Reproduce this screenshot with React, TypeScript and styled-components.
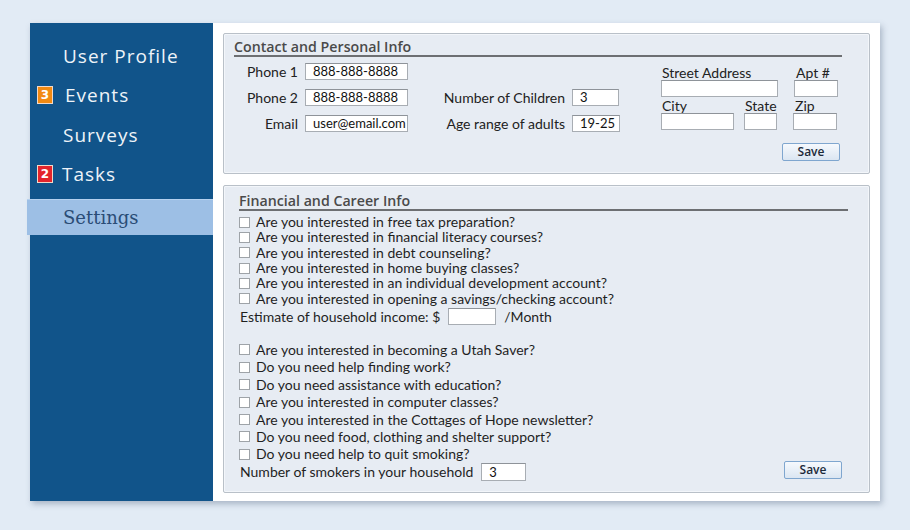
import React from "react";
import styled, { createGlobalStyle } from "styled-components";

const GlobalStyle = createGlobalStyle`
  html, body {
    margin: 0;
    padding: 0;
    background: #e2ebf5;
  }
  body {
    font-family: Lato, "Open Sans", sans-serif;
    color: #222;
  }
`;

const Page = styled.div`
  width: 910px;
  height: 530px;
  padding: 23px 30px 0 30px;
  box-sizing: border-box;
`;

const Window = styled.div`
  display: flex;
  width: 850px;
  height: 478px;
  background: #fff;
  box-shadow: 2px 3px 6px rgba(60, 80, 110, 0.35);
`;

const Sidebar = styled.nav`
  width: 183px;
  flex-shrink: 0;
  background: #11548a;
  padding-top: 13px;
  display: flex;
  flex-direction: column;
`;

const NavItem = styled.div<{ $active?: boolean }>`
  display: flex;
  align-items: center;
  height: ${(p) => (p.$active ? "35px" : "39.5px")};
  margin-left: ${(p) => (p.$active ? "-3px" : "0")};
  padding-left: ${(p) => (p.$active ? "10px" : "7px")};
  background: ${(p) => (p.$active ? "#9dbfe5" : "transparent")};
  border-top: ${(p) => (p.$active ? "1px solid #b5d0ee" : "none")};
  margin-top: ${(p) => (p.$active ? "5px" : "0")};
`;

const Badge = styled.span<{ $color: string; $gap: number }>`
  width: 16px;
  height: 18px;
  box-sizing: border-box;
  border: 1px solid #f2d9c8;
  background: ${(p) => p.$color};
  color: #fff;
  font-family: "DejaVu Sans", sans-serif;
  font-weight: bold;
  font-size: 12px;
  display: flex;
  align-items: center;
  justify-content: center;
  margin-right: ${(p) => p.$gap}px;
`;

const NavLabel = styled.span<{ $indent?: boolean }>`
  font-family: "Open Sans", sans-serif;
  font-size: 19px;
  letter-spacing: 1px;
  color: #eef3f8;
  padding-left: ${(p) => (p.$indent ? "26px" : "0")};
`;

const ActiveLabel = styled.span`
  font-family: "DejaVu Serif", serif;
  font-size: 18px;
  color: #2a4c76;
  padding-left: 26px;
`;

const Content = styled.main`
  flex: 1;
  padding: 10px 10px 8px 10px;
  display: flex;
  flex-direction: column;
  gap: 11px;
`;

const Panel = styled.section`
  background: #e7ecf3;
  border: 1px solid #b9c0c8;
  border-radius: 2px;
  box-shadow: inset 0 0 0 1px #f3f6fa;
`;

const ContactPanel = styled(Panel)`
  height: 141px;
  box-sizing: border-box;
  padding: 4px 27px 0 10px;
`;

const FinancePanel = styled(Panel)`
  flex: 1;
  padding: 6px 21px 0 15px;
`;

const PanelTitle = styled.h2`
  margin: 0;
  font-family: "Open Sans", sans-serif;
  font-weight: 600;
  font-size: 14.2px;
  color: #4a4a4a;
  line-height: 17px;
  border-bottom: 2px solid #6d6f72;
`;

const ContactBody = styled.div`
  display: flex;
  padding-top: 6px;
`;

const FieldGrid = styled.div`
  display: grid;
  column-gap: 7px;
  row-gap: 9px;
  align-items: center;
  justify-items: end;
`;

const LeftFields = styled(FieldGrid)`
  grid-template-columns: 64px 103px;
`;

const MiddleFields = styled(FieldGrid)`
  margin-top: 26px;
  margin-left: 30px;
  grid-template-columns: 127px 48px;
`;

const Label = styled.label`
  font-size: 14px;
  color: #222;
  white-space: nowrap;
`;

const TextInput = styled.div<{ $w: number; $h?: number }>`
  width: ${(p) => p.$w}px;
  height: ${(p) => p.$h ?? 17}px;
  box-sizing: border-box;
  background: #fff;
  border: 1px solid #a8adb3;
  border-top-color: #8e9399;
  font-size: 13px;
  line-height: ${(p) => (p.$h ?? 17) - 2}px;
  padding-left: 7px;
  color: #111;
  justify-self: start;
  white-space: nowrap;
  overflow: hidden;
`;

const AddressGrid = styled.div`
  margin-left: auto;
  margin-right: 4px;
  margin-top: 3px;
  display: grid;
  grid-template-columns: 83px 50px 44px;
  grid-template-areas:
    "sl sl al"
    "si si ai"
    "cl stl zl"
    "ci sti zi";
  font-size: 14px;
`;

const AddrLabel = styled.span<{ $area: string; $pad?: number }>`
  grid-area: ${(p) => p.$area};
  padding-left: ${(p) => p.$pad ?? 1}px;
  line-height: 14px;
  color: #222;
  align-self: end;
`;

const AddrInput = styled.div<{ $area: string; $w: number; $ml?: number }>`
  grid-area: ${(p) => p.$area};
  width: ${(p) => p.$w}px;
  margin-left: ${(p) => p.$ml ?? 0}px;
  height: 17px;
  box-sizing: border-box;
  background: #fff;
  border: 1px solid #a8adb3;
  border-top-color: #8e9399;
  margin-bottom: 2px;
`;

const SaveRow = styled.div`
  display: flex;
  justify-content: flex-end;
  margin-top: 11px;
  padding-right: 2px;
`;

const SaveButton = styled.button`
  width: 58px;
  height: 18px;
  padding: 0;
  font-family: "Open Sans", sans-serif;
  font-weight: 600;
  font-size: 12px;
  color: #1c2a3a;
  border: 1px solid #7fa6cf;
  border-radius: 2px;
  background: linear-gradient(#f6f9fd, #dbe6f2);
  line-height: 16px;
`;

const FinanceBody = styled.div`
  padding-top: 3px;
`;

const CheckList = styled.div<{ $rowH: number; $mt?: number }>`
  display: grid;
  grid-auto-rows: ${(p) => p.$rowH}px;
  align-items: center;
  margin-top: ${(p) => p.$mt ?? 0}px;
`;

const CheckRow = styled.label`
  display: flex;
  align-items: center;
  font-size: 14px;
  color: #1f1f1f;
  white-space: nowrap;
`;

const Box = styled.span`
  width: 11px;
  height: 11px;
  box-sizing: border-box;
  background: #fff;
  border: 1px solid #9ea3a8;
  margin-right: 6px;
  margin-top: 1px;
`;

const IncomeRow = styled.div`
  display: flex;
  align-items: center;
  gap: 8px;
  height: 20px;
  margin-top: 1px;
  padding-left: 1px;
  font-size: 14px;
  color: #1f1f1f;
`;

const FooterRow = styled.div`
  display: flex;
  justify-content: space-between;
  align-items: flex-start;
  margin-top: -2px;
  padding-right: 6px;
`;

const SmokersRow = styled.div`
  display: flex;
  align-items: center;
  gap: 8px;
  padding-left: 1px;
  margin-top: 2px;
  font-size: 14px;
  color: #1f1f1f;
`;

const firstQuestions = [
  "Are you interested in free tax preparation?",
  "Are you interested in financial literacy courses?",
  "Are you interested in debt counseling?",
  "Are you interested in home buying classes?",
  "Are you interested in an individual development account?",
  "Are you interested in opening a savings/checking account?",
];

const secondQuestions = [
  "Are you interested in becoming a Utah Saver?",
  "Do you need help finding work?",
  "Do you need assistance with education?",
  "Are you interested in computer classes?",
  "Are you interested in the Cottages of Hope newsletter?",
  "Do you need food, clothing and shelter support?",
  "Do you need help to quit smoking?",
];

export default function App() {
  return (
    <Page>
      <GlobalStyle />
      <Window>
        <Sidebar>
          <NavItem>
            <NavLabel $indent>User Profile</NavLabel>
          </NavItem>
          <NavItem>
            <Badge $color="#f28a12" $gap={12}>3</Badge>
            <NavLabel>Events</NavLabel>
          </NavItem>
          <NavItem>
            <NavLabel $indent>Surveys</NavLabel>
          </NavItem>
          <NavItem>
            <Badge $color="#e3242b" $gap={9}>2</Badge>
            <NavLabel>Tasks</NavLabel>
          </NavItem>
          <NavItem $active>
            <ActiveLabel>Settings</ActiveLabel>
          </NavItem>
        </Sidebar>
        <Content>
          <ContactPanel>
            <PanelTitle>Contact and Personal Info</PanelTitle>
            <ContactBody>
              <LeftFields>
                <Label>Phone 1</Label>
                <TextInput $w={103}>888-888-8888</TextInput>
                <Label>Phone 2</Label>
                <TextInput $w={103}>888-888-8888</TextInput>
                <Label>Email</Label>
                <TextInput $w={103}>user@email.com</TextInput>
              </LeftFields>
              <MiddleFields>
                <Label>Number of Children</Label>
                <TextInput $w={47}>3</TextInput>
                <Label>Age range of adults</Label>
                <TextInput $w={48}>19-25</TextInput>
              </MiddleFields>
              <AddressGrid>
                <AddrLabel $area="sl">Street Address</AddrLabel>
                <AddrInput $area="si" $w={117} />
                <AddrLabel $area="al" $pad={2}>Apt #</AddrLabel>
                <AddrInput $area="ai" $w={44} />
                <AddrLabel $area="cl">City</AddrLabel>
                <AddrInput $area="ci" $w={73} />
                <AddrLabel $area="stl">State</AddrLabel>
                <AddrInput $area="sti" $w={33} />
                <AddrLabel $area="zl">Zip</AddrLabel>
                <AddrInput $area="zi" $w={44} $ml={-1} />
              </AddressGrid>
            </ContactBody>
            <SaveRow>
              <SaveButton>Save</SaveButton>
            </SaveRow>
          </ContactPanel>
          <FinancePanel>
            <PanelTitle>Financial and Career Info</PanelTitle>
            <FinanceBody>
              <CheckList $rowH={15.3}>
                {firstQuestions.map((q) => (
                  <CheckRow key={q}>
                    <Box />
                    {q}
                  </CheckRow>
                ))}
              </CheckList>
              <IncomeRow>
                Estimate of household income: $
                <TextInput $w={48} />
                <span>/Month</span>
              </IncomeRow>
              <CheckList $rowH={17.4} $mt={14}>
                {secondQuestions.map((q) => (
                  <CheckRow key={q}>
                    <Box />
                    {q}
                  </CheckRow>
                ))}
              </CheckList>
              <FooterRow>
                <SmokersRow>
                  Number of smokers in your household
                  <TextInput $w={45} $h={18}>3</TextInput>
                </SmokersRow>
                <SaveButton>Save</SaveButton>
              </FooterRow>
            </FinanceBody>
          </FinancePanel>
        </Content>
      </Window>
    </Page>
  );
}
